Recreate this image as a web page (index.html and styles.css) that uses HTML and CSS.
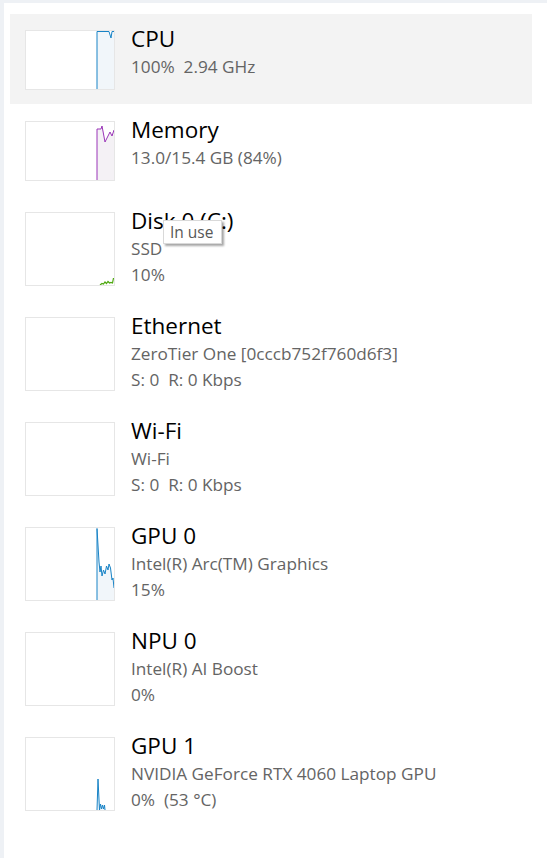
FILE: index.html
```html
<!DOCTYPE html>
<html lang="en">
<head>
<meta charset="utf-8">
<title>Performance</title>
<link rel="stylesheet" href="styles.css">
</head>
<body>
<div class="sidebar">
  <div class="row row-2 selected">
    <div class="graph g60">
      <svg width="88" height="58" viewBox="0 0 88 58">
        <path class="fill-blue" d="M71 58 L71 0 L83 0 L85 7 L86 0 L88 0 L88 58 Z"/>
        <path class="line-blue" d="M71 58 L71 0.5 L83 0.5 L85 7 L86 0.5 L88 0.5"/>
      </svg>
    </div>
    <div class="info">
      <div class="title">CPU</div>
      <div class="sub">100%&nbsp; 2.94 GHz</div>
    </div>
  </div>

  <div class="row row-2">
    <div class="graph g60">
      <svg width="88" height="58" viewBox="0 0 88 58">
        <path class="fill-purple" d="M71 58 L71 7 L75 7 L76 4 L79 20 L82 14 L84 10 L86 14 L88 8 L88 58 Z"/>
        <path class="line-purple" d="M71 58 L71 7 L75 7 L76 4 L79 20 L82 14 L84 10 L86 14 L88 8"/>
      </svg>
    </div>
    <div class="info">
      <div class="title">Memory</div>
      <div class="sub">13.0/15.4 GB (84%)</div>
    </div>
  </div>

  <div class="row row-3">
    <div class="graph g74">
      <svg width="88" height="72" viewBox="0 0 88 72">
        <path class="line-green" d="M74 72 L76 70.5 L77.5 71 L79 69 L80.5 70.5 L82 68.5 L83.5 70 L85 69.5 L86.5 70 L87.5 65"/>
      </svg>
    </div>
    <div class="info">
      <div class="title">Disk 0 (C:)</div>
      <div class="sub">SSD</div>
      <div class="sub">10%</div>
    </div>
    <div class="tooltip">In use</div>
  </div>

  <div class="row row-3">
    <div class="graph g74"></div>
    <div class="info">
      <div class="title">Ethernet</div>
      <div class="sub">ZeroTier One [0cccb752f760d6f3]</div>
      <div class="sub">S: 0&nbsp; R: 0 Kbps</div>
    </div>
  </div>

  <div class="row row-3">
    <div class="graph g74"></div>
    <div class="info">
      <div class="title">Wi-Fi</div>
      <div class="sub">Wi-Fi</div>
      <div class="sub">S: 0&nbsp; R: 0 Kbps</div>
    </div>
  </div>

  <div class="row row-3">
    <div class="graph g74">
      <svg width="88" height="72" viewBox="0 0 88 72">
        <path class="fill-blue" d="M71 72 L71 0 L73 34 L74 44 L75 38 L76 48 L77.5 42 L79 46 L80.5 38 L82 42 L83 36 L84.5 40 L86 52 L87 50 L88 60 L88 72 Z"/>
        <path class="line-blue" d="M71 72 L71 0.5 L73 34 L74 44 L75 38 L76 48 L77.5 42 L79 46 L80.5 38 L82 42 L83 36 L84.5 40 L86 52 L87 50 L88 60"/>
      </svg>
    </div>
    <div class="info">
      <div class="title">GPU 0</div>
      <div class="sub">Intel(R) Arc(TM) Graphics</div>
      <div class="sub">15%</div>
    </div>
  </div>

  <div class="row row-3">
    <div class="graph g74"></div>
    <div class="info">
      <div class="title">NPU 0</div>
      <div class="sub">Intel(R) AI Boost</div>
      <div class="sub">0%</div>
    </div>
  </div>

  <div class="row row-3">
    <div class="graph g74">
      <svg width="88" height="72" viewBox="0 0 88 72">
        <path class="fill-blue" d="M71 72 L72 41 L73.5 72 L74.5 66 L75.5 71 L76.5 67 L77.5 71 L78.5 67 L79 72 Z"/>
        <path class="line-blue" d="M71 72 L72 41 L73.5 72 L74.5 66 L75.5 71 L76.5 67 L77.5 71 L78.5 67 L79 72"/>
      </svg>
    </div>
    <div class="info">
      <div class="title">GPU 1</div>
      <div class="sub">NVIDIA GeForce RTX 4060 Laptop GPU</div>
      <div class="sub">0%&nbsp; (53 °C)</div>
    </div>
  </div>
</div>
</body>
</html>
```

FILE: styles.css
```css
html, body {
  margin: 0;
  padding: 0;
  background: #ffffff;
}

body {
  font-family: "Open Sans", "Noto Sans", sans-serif;
  width: 547px;
  height: 858px;
  overflow: hidden;
}

.sidebar {
  box-sizing: border-box;
  height: 858px;
  border-top: 3px solid #eef1f5;
  border-left: 4px solid #eef1f5;
  padding: 11px 15px 0 6px;
  display: flex;
  flex-direction: column;
  gap: 1px;
}

.row {
  position: relative;
  box-sizing: border-box;
  display: flex;
  align-items: flex-start;
  gap: 16px;
  padding: 16px 15px 0 15px;
}

.row-2 { height: 90px; }
.row-3 { height: 104px; }

.selected {
  background: #f3f3f3;
}

.graph {
  box-sizing: border-box;
  width: 90px;
  flex: none;
  border: 1px solid #e6e6e6;
  background: #ffffff;
  overflow: hidden;
}

.graph svg {
  display: block;
}

.g60 { height: 60px; }
.g74 { height: 74px; }

.info {
  margin-top: -6px;
  display: flex;
  flex-direction: column;
  white-space: nowrap;
}

.title {
  font-size: 22.5px;
  line-height: 30px;
  color: #000000;
}

.sub {
  font-size: 17.2px;
  line-height: 25.5px;
  color: #646464;
}

.fill-blue { fill: #f1f6fa; stroke: none; }
.line-blue { fill: none; stroke: #1883c6; stroke-width: 1; }
.fill-purple { fill: #f4f1f5; stroke: none; }
.line-purple { fill: none; stroke: #9a34b8; stroke-width: 1; }
.line-green { fill: none; stroke: #4ca70d; stroke-width: 1.2; }

.tooltip {
  position: absolute;
  left: 153px;
  top: 24px;
  box-sizing: border-box;
  width: 59px;
  height: 24px;
  background: #ffffff;
  border: 1px solid #d9d9d9;
  box-shadow: 2px 2px 2px rgba(0, 0, 0, 0.35);
  font-size: 15.5px;
  line-height: 22px;
  color: #575757;
  padding-left: 6px;
}
```
